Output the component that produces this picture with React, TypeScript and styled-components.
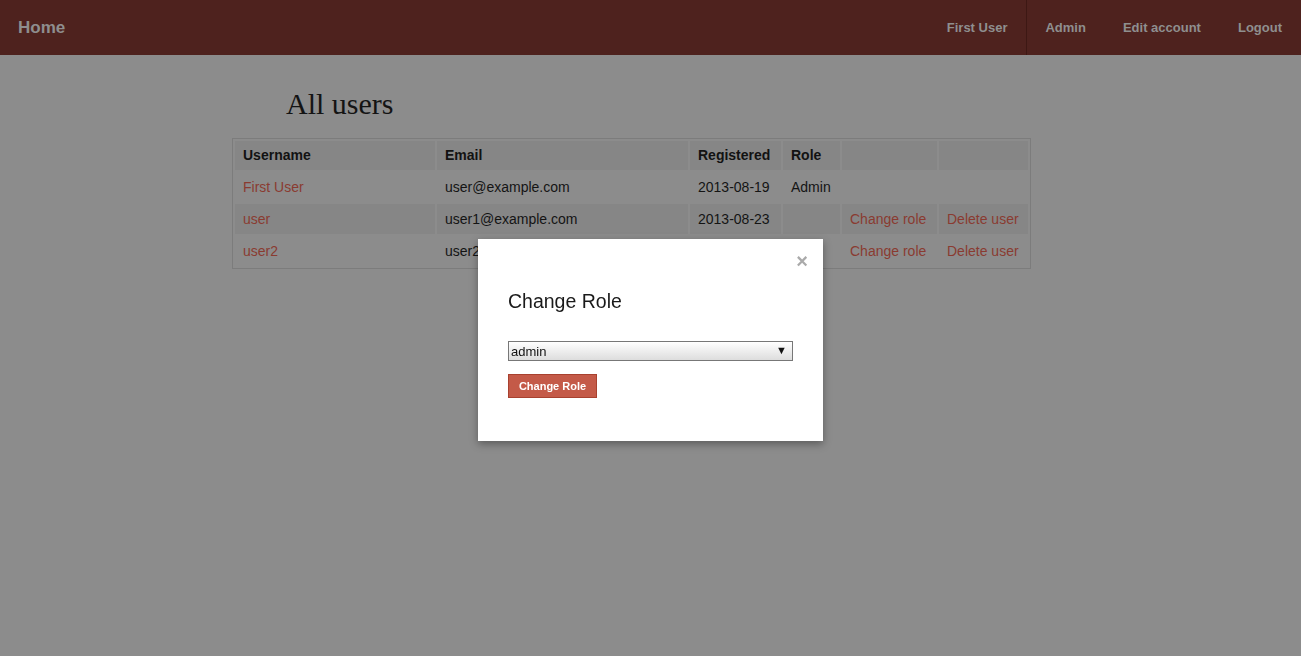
import React from "react";
import styled, { createGlobalStyle } from "styled-components";

const Global = createGlobalStyle`
  * { box-sizing: border-box; }
  html, body { margin: 0; padding: 0; }
  body {
    background: #8c8c8c;
    font-family: "Liberation Sans", Arial, sans-serif;
    color: #151515;
    min-height: 656px;
  }
`;

const NavBar = styled.header`
  display: flex;
  align-items: stretch;
  justify-content: space-between;
  height: 55px;
  background: #4e221e;
`;

const Brand = styled.a`
  display: flex;
  align-items: center;
  padding: 0 18px;
  font-size: 17px;
  font-weight: bold;
  color: #8e8e8e;
  text-decoration: none;
`;

const NavLinks = styled.nav`
  display: flex;
  align-items: stretch;
  padding-right: 0.5px;
`;

const NavLink = styled.a<{ $divider?: boolean }>`
  display: flex;
  align-items: center;
  padding: 0 18.5px;
  font-size: 13px;
  font-weight: bold;
  color: #8f8f8f;
  text-decoration: none;
  border-left: ${(p) => (p.$divider ? "1px solid #3d1814" : "none")};
`;

const Main = styled.main`
  padding: 31px 0 0 232px;
`;

const Title = styled.h1`
  margin: 0 0 16px;
  padding-left: 54px;
  font-family: "Liberation Serif", "Times New Roman", serif;
  font-weight: normal;
  font-size: 30px;
  line-height: 36px;
  color: #141414;
`;

const Table = styled.table`
  width: 799px;
  border: 1px solid #7c7c7c;
  border-collapse: separate;
  border-spacing: 2px;
  font-size: 14px;
`;

const Row = styled.tr<{ $striped?: boolean }>`
  background: ${(p) => (p.$striped ? "#868686" : "transparent")};
`;

const Th = styled.th`
  text-align: left;
  padding: 5px 8px 6px;
  line-height: 18px;
  font-weight: bold;
  color: #121212;
  background: #868686;
`;

const Td = styled.td`
  padding: 6px 8px;
  line-height: 18px;
  color: #141414;
  white-space: nowrap;
`;

const TableLink = styled.a`
  color: #8a3b31;
  text-decoration: none;
`;

const Modal = styled.div`
  position: fixed;
  left: 478px;
  top: 239px;
  width: 345px;
  height: 202px;
  background: #ffffff;
  box-shadow: 0 3px 8px rgba(0, 0, 0, 0.35);
  padding: 50px 30px 0;
`;

const Close = styled.button`
  position: absolute;
  top: 10px;
  right: 15px;
  border: none;
  background: none;
  padding: 0;
  font-family: "Liberation Sans", Arial, sans-serif;
  font-size: 20px;
  font-weight: bold;
  line-height: 24px;
  color: #aaaaaa;
  cursor: pointer;
`;

const ModalTitle = styled.h3`
  margin: 0 0 28px;
  font-size: 19.5px;
  font-weight: normal;
  line-height: 24px;
  color: #1a1a1a;
`;

const SelectWrap = styled.div`
  position: relative;
  width: 285px;
  height: 20px;
  margin-bottom: 13px;
`;

const Select = styled.select`
  appearance: none;
  -webkit-appearance: none;
  width: 100%;
  height: 20px;
  margin: 0;
  padding: 0 20px 0 2px;
  border: 1px solid #777777;
  border-radius: 0;
  background: linear-gradient(#ffffff, #dddddd);
  font-family: "Liberation Sans", Arial, sans-serif;
  font-size: 13px;
  color: #111111;
`;

const Arrow = styled.span`
  position: absolute;
  right: 6px;
  top: 3px;
  font-size: 11px;
  line-height: 13px;
  color: #111111;
  pointer-events: none;
`;

const SubmitButton = styled.button`
  display: block;
  width: 89px;
  height: 24px;
  padding: 0;
  border: 1px solid #a8412f;
  background: #c45a48;
  color: #ffffff;
  font-family: "Liberation Sans", Arial, sans-serif;
  font-size: 11px;
  font-weight: bold;
`;

type User = { name: string; email: string; date: string; role: string; actions: boolean };

const users: User[] = [
  { name: "First User", email: "user@example.com", date: "2013-08-19", role: "Admin", actions: false },
  { name: "user", email: "user1@example.com", date: "2013-08-23", role: "", actions: true },
  { name: "user2", email: "user2@example.com", date: "2013-08-23", role: "", actions: true },
];

export default function App() {
  return (
    <>
      <Global />
      <NavBar>
        <Brand href="#">Home</Brand>
        <NavLinks>
          <NavLink href="#">First User</NavLink>
          <NavLink href="#" $divider>Admin</NavLink>
          <NavLink href="#">Edit account</NavLink>
          <NavLink href="#">Logout</NavLink>
        </NavLinks>
      </NavBar>
      <Main>
        <Title>All users</Title>
        <Table>
          <thead>
            <tr>
              <Th style={{ width: 200 }}>Username</Th>
              <Th style={{ width: 251 }}>Email</Th>
              <Th style={{ width: 91 }}>Registered</Th>
              <Th style={{ width: 57 }}>Role</Th>
              <Th style={{ width: 95 }}></Th>
              <Th></Th>
            </tr>
          </thead>
          <tbody>
            {users.map((u, i) => (
              <Row key={u.name} $striped={i % 2 === 1}>
                <Td><TableLink href="#">{u.name}</TableLink></Td>
                <Td>{u.email}</Td>
                <Td>{u.date}</Td>
                <Td>{u.role}</Td>
                <Td>{u.actions && <TableLink href="#">Change role</TableLink>}</Td>
                <Td>{u.actions && <TableLink href="#">Delete user</TableLink>}</Td>
              </Row>
            ))}
          </tbody>
        </Table>
      </Main>
      <Modal>
        <Close aria-label="Close">×</Close>
        <ModalTitle>Change Role</ModalTitle>
        <SelectWrap>
          <Select defaultValue="admin">
            <option value="admin">admin</option>
            <option value="user">user</option>
          </Select>
          <Arrow>▼</Arrow>
        </SelectWrap>
        <SubmitButton>Change Role</SubmitButton>
      </Modal>
    </>
  );
}
